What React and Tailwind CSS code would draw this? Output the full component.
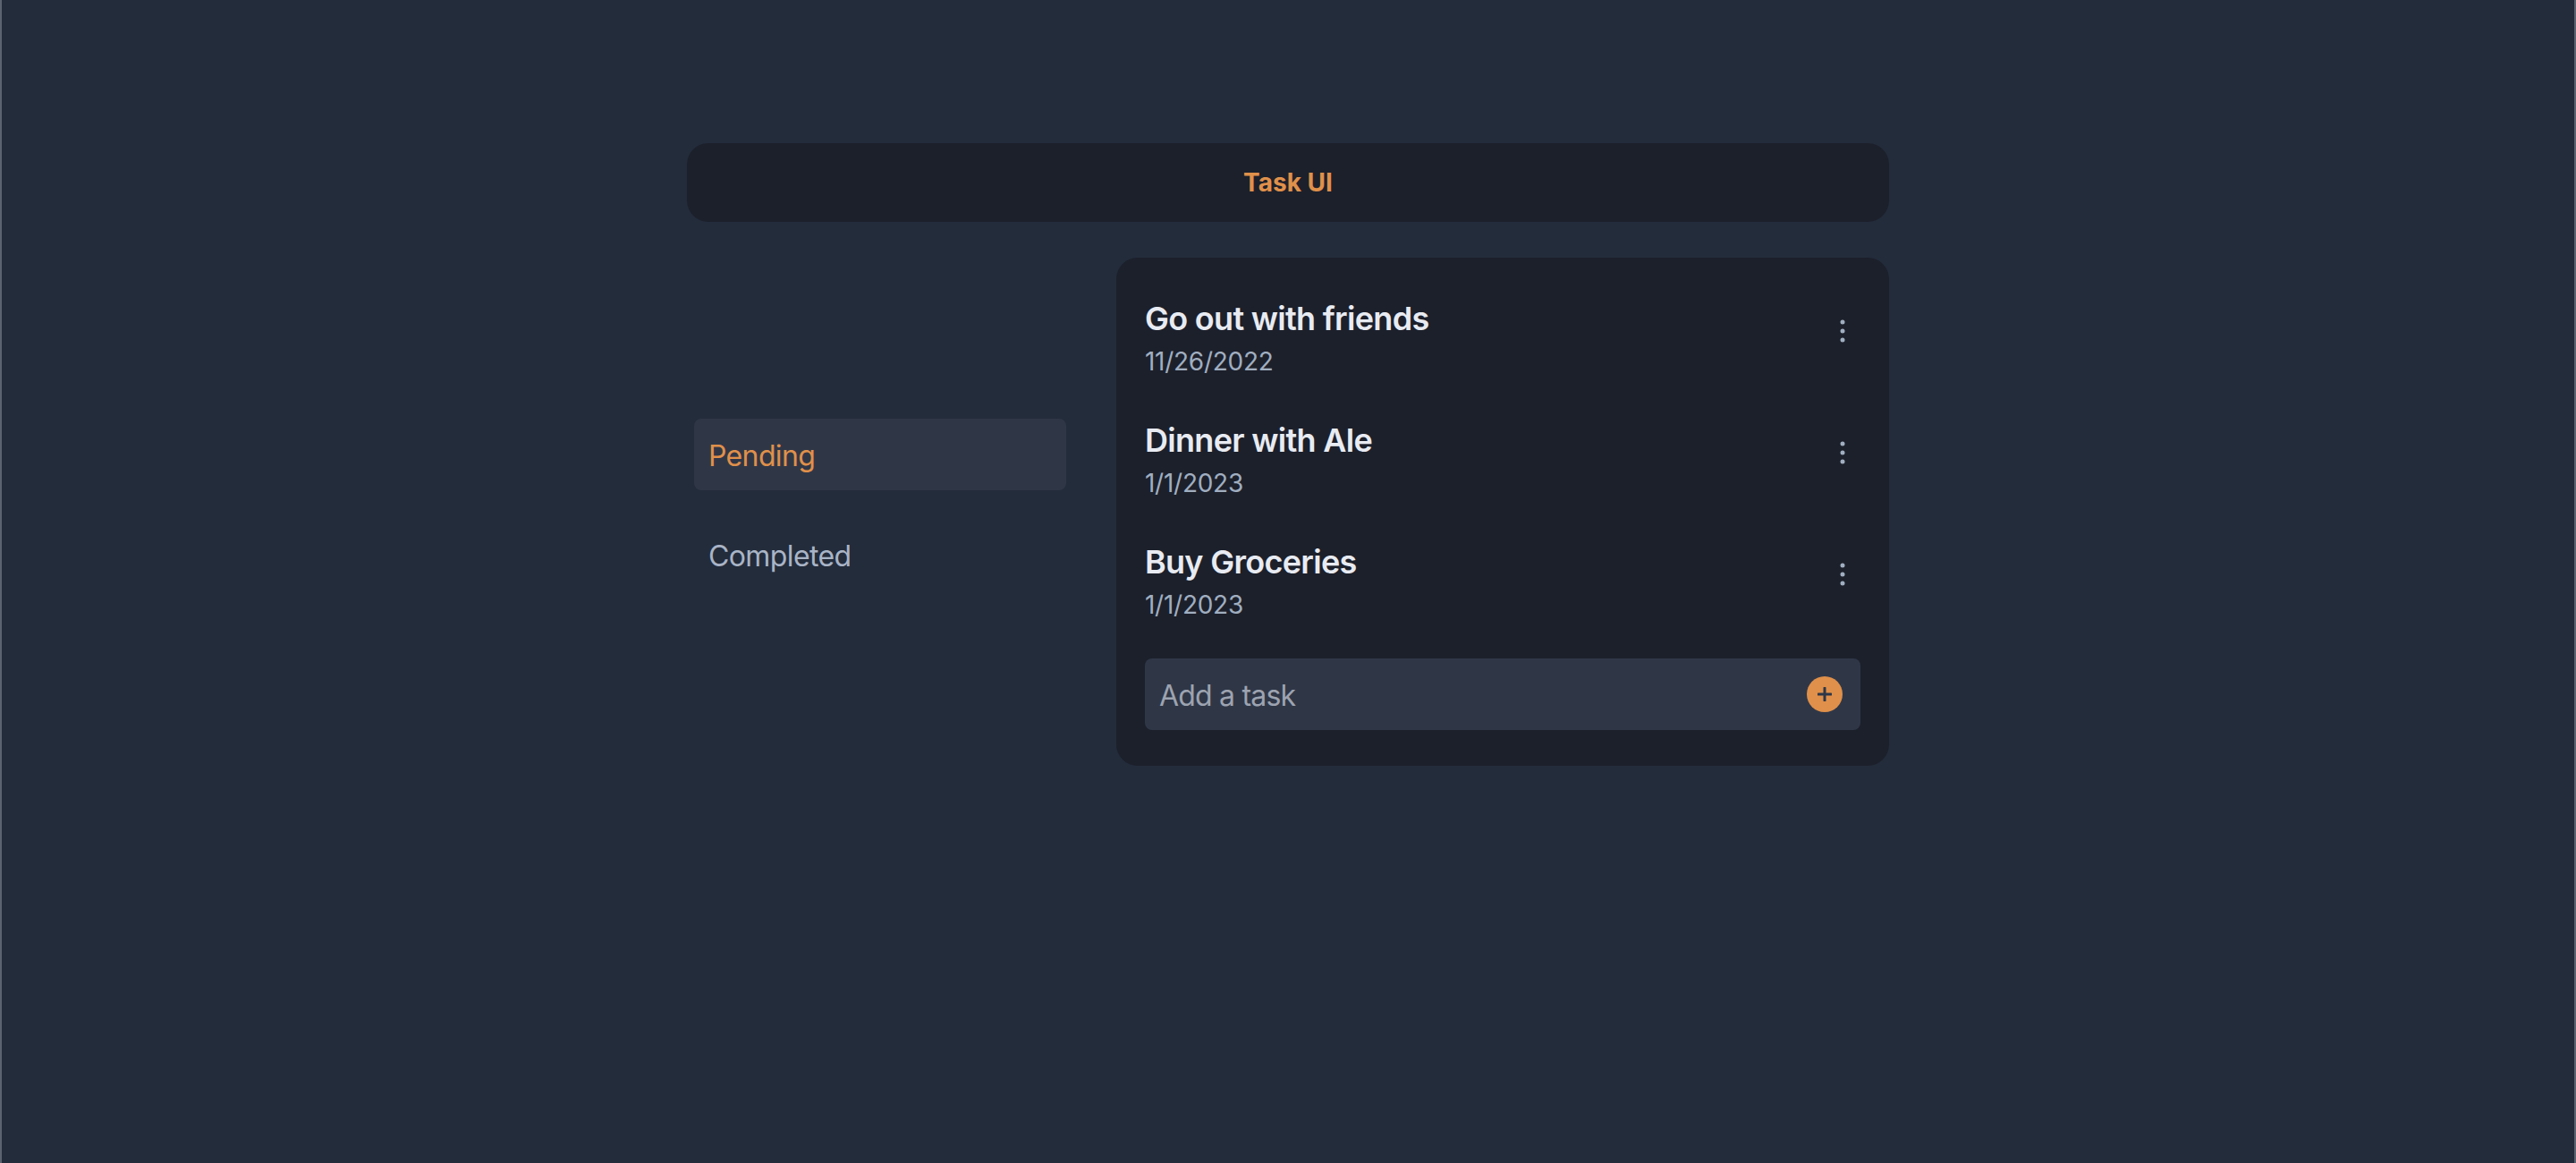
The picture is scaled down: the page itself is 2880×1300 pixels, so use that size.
const tasks = [
  { title: "Go out with friends", date: "11/26/2022" },
  { title: "Dinner with Ale", date: "1/1/2023" },
  { title: "Buy Groceries", date: "1/1/2023" },
];

function Dots() {
  return (
    <svg width="8" height="32" viewBox="0 0 8 32" className="shrink-0 self-center">
      <circle cx="4" cy="6" r="2.5" fill="#a0aec0" />
      <circle cx="4" cy="16" r="2.5" fill="#a0aec0" />
      <circle cx="4" cy="26" r="2.5" fill="#a0aec0" />
    </svg>
  );
}

export default function App() {
  return (
    <div className="h-[1300px] w-full bg-[#232c3b] border-x-2 border-[#5c6370] flex flex-col items-center pt-[160px] font-['Inter',sans-serif]">
      <div className="w-[1344px] h-[88px] rounded-[24px] bg-[#1c202b] flex items-center justify-center">
        <h1 className="text-[28px] leading-[44px] font-bold text-[#e0904a]">Task UI</h1>
      </div>
      <div className="w-[1344px] mt-10 flex">
        <div className="w-[480px] pl-2 pr-[56px] pt-[180px] flex flex-col gap-8">
          <div className="h-20 rounded-lg bg-[#2f3747] flex items-center pl-4 pt-[3px] text-[32px] tracking-[-0.65px] text-[#e0904a]">Pending</div>
          <div className="h-20 rounded-lg flex items-center pl-4 pt-[3px] text-[32px] tracking-[-0.6px] text-[#a9b4c6]">Completed</div>
        </div>
        <div className="w-[864px] h-[568px] rounded-[24px] bg-[#1c202b] px-8 pt-8 pb-10 flex flex-col">
          <div className="flex flex-col gap-9">
            {tasks.map((t) => (
              <div key={t.title} className="h-[100px] flex items-start justify-between pr-4">
                <div className="flex flex-col pt-[10px]">
                  <span className="text-[36px] leading-[52px] font-semibold tracking-[-0.7px] text-[#e8ebf2]">{t.title}</span>
                  <span className="text-[28px] leading-[44px] tracking-[-0.27px] text-[#a0aec0]">{t.date}</span>
                </div>
                <Dots />
              </div>
            ))}
          </div>
          <div className="mt-11 h-20 rounded-lg bg-[#2f3747] flex items-center justify-between pl-4 pr-5">
            <span className="pt-[3px] text-[32px] tracking-[-0.8px] text-[#9da3b0]">Add a task</span>
            <span className="w-10 h-10 rounded-full bg-[#e0904a] flex items-center justify-center">
              <svg width="16" height="16" viewBox="0 0 16 16">
                <path d="M8 1v14M1 8h14" stroke="#2d3748" strokeWidth="3" strokeLinecap="round" />
              </svg>
            </span>
          </div>
        </div>
      </div>
    </div>
  );
}
